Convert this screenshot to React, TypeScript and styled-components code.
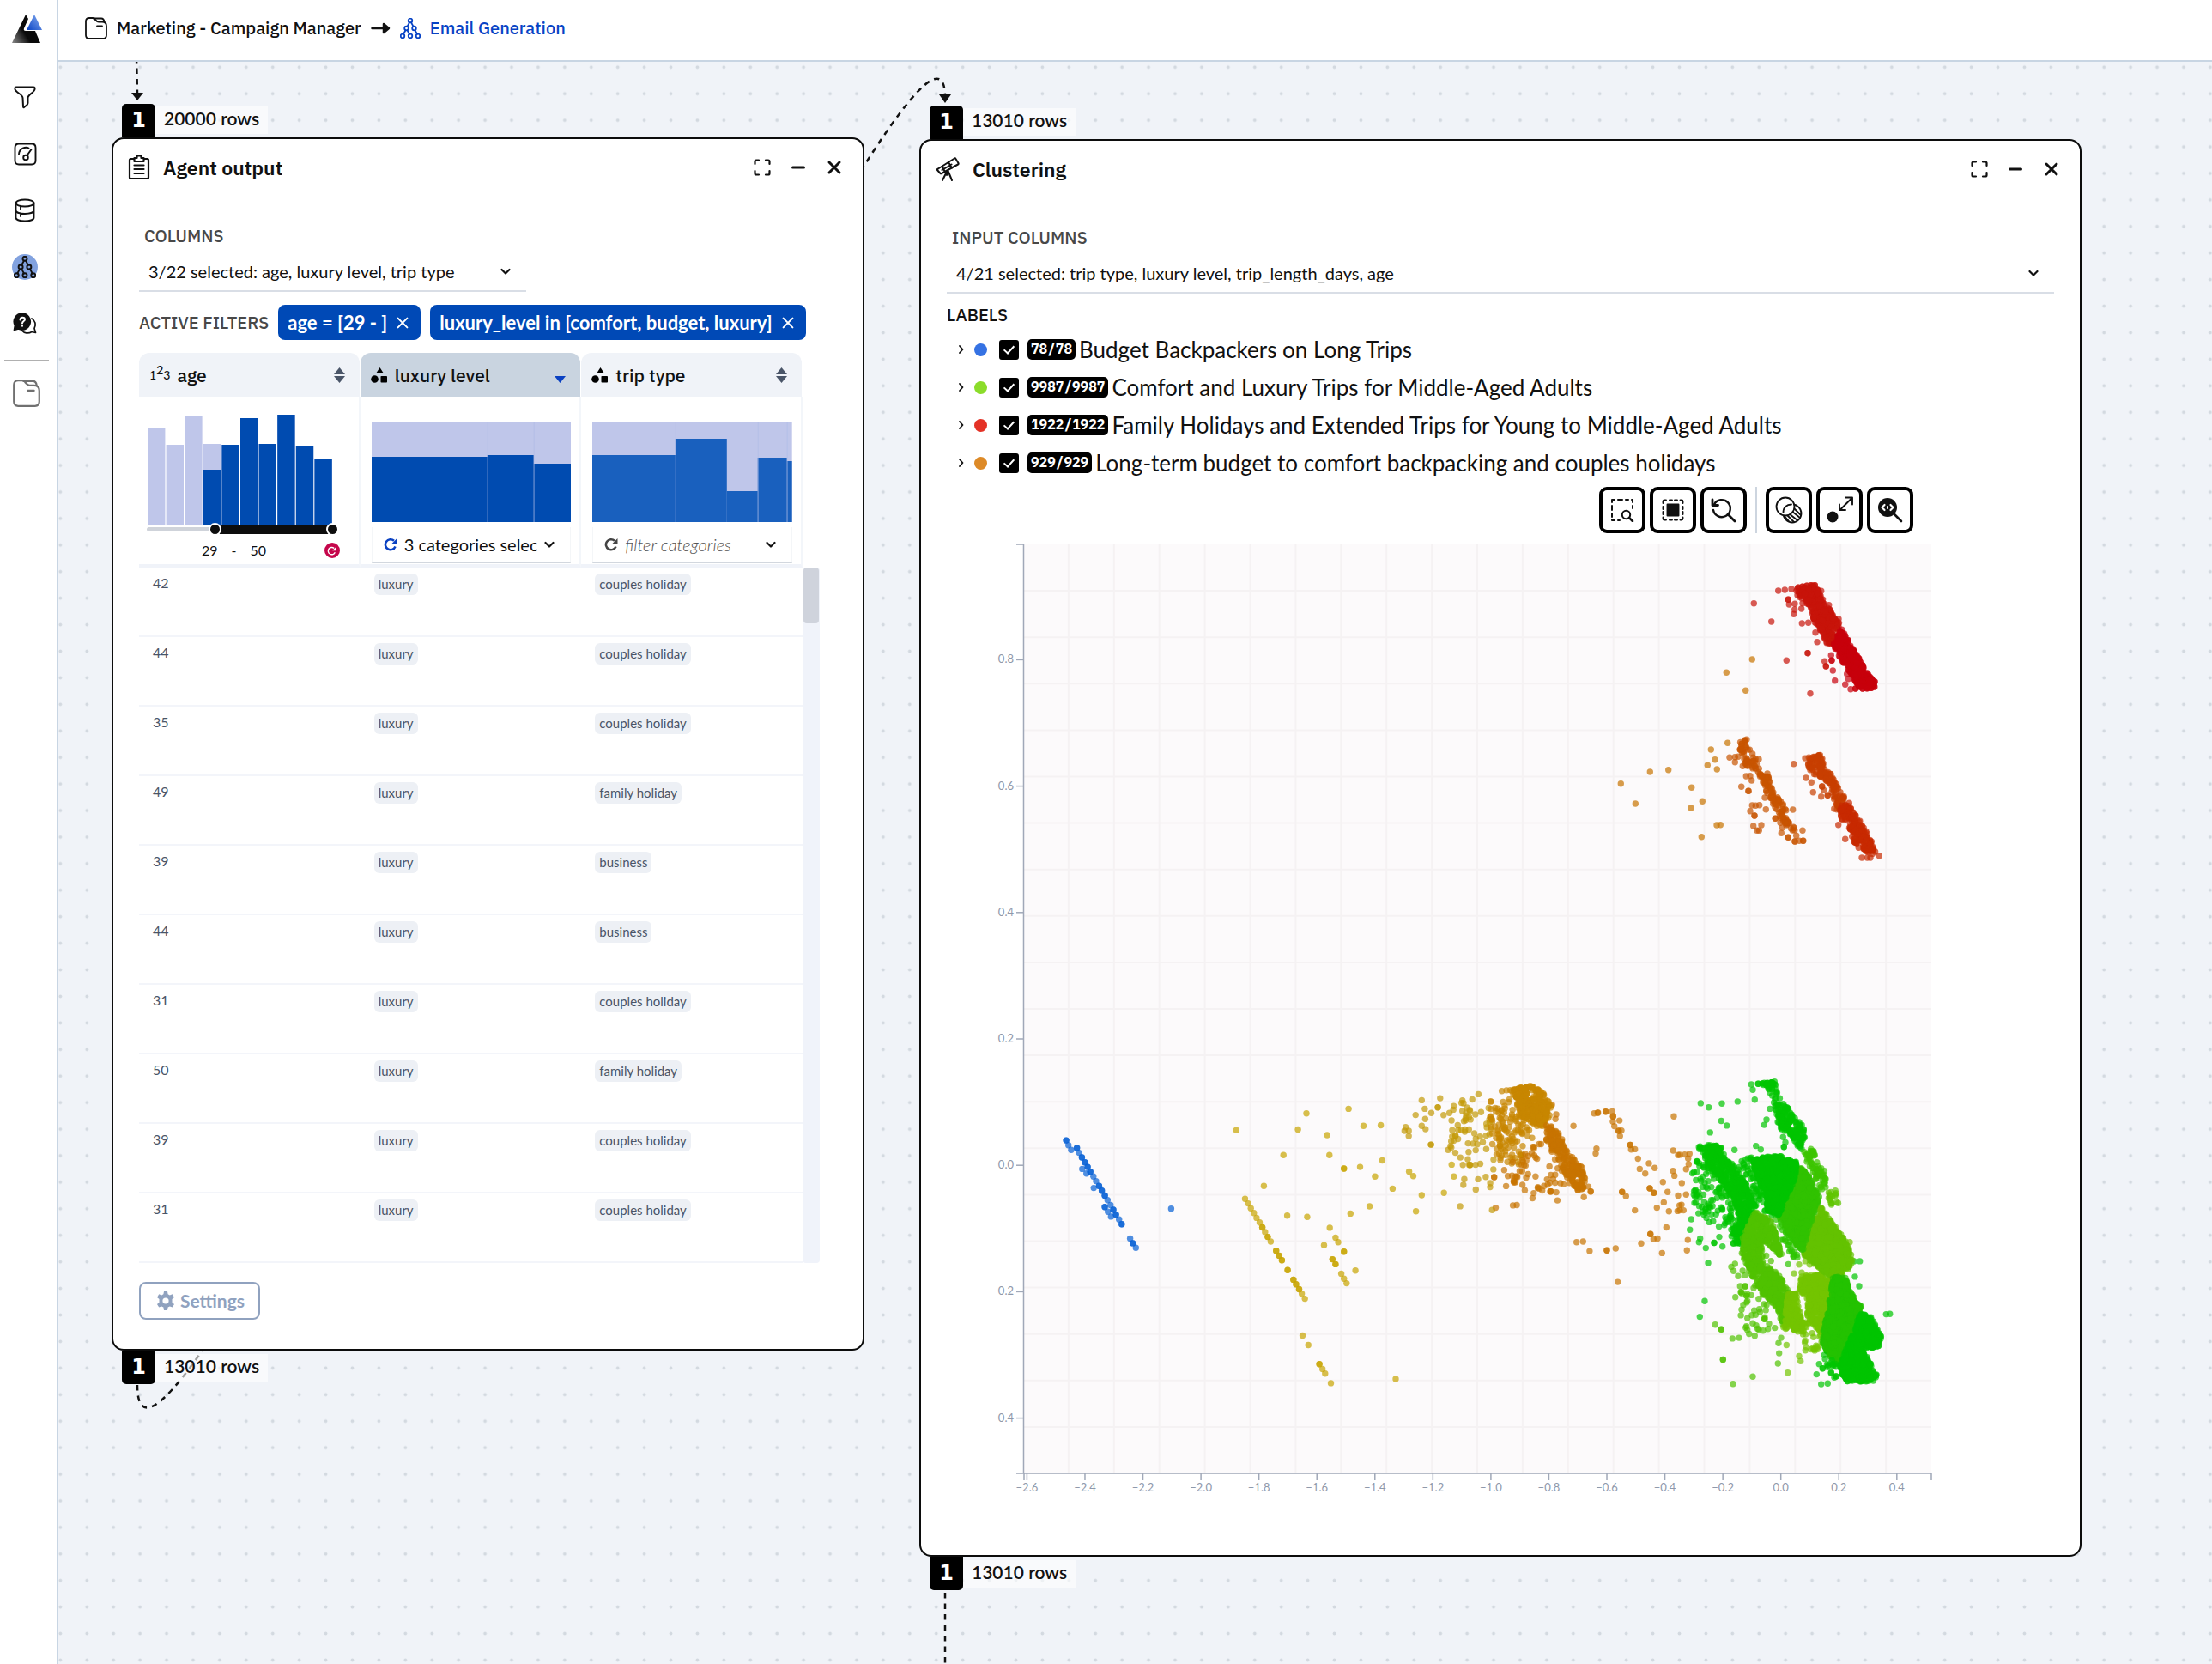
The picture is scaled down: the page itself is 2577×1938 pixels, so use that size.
import React, { useMemo, useState } from "react";
import styled, { createGlobalStyle } from "styled-components";

const heading = '"IBM Plex Sans", Inter, "Noto Sans", sans-serif';
const body = 'Lato, "Noto Sans", sans-serif';
const mono = '"IBM Plex Mono", "Liberation Mono", monospace';

const GlobalStyle = createGlobalStyle`
  *, *::before, *::after { box-sizing: border-box; }
  body { margin: 0; background: #fff; color: #111; font-family: ${body}; }
  button, select, input { font: inherit; color: inherit; margin: 0; }
  button { cursor: pointer; }
`;

/* ---------- shell ---------- */

const Shell = styled.div`
  display: grid;
  grid-template-columns: 68px minmax(0, 1fr);
  grid-template-rows: 72px minmax(0, 1fr);
  height: 100vh;
  overflow: hidden;
`;

const Sidebar = styled.nav`
  grid-row: 1 / 3;
  display: flex;
  flex-direction: column;
  border-right: 2px solid #c8d5e3;
  background: #fff;
`;

const LogoLink = styled.a`
  display: flex;
  height: 80px;
  padding: 16px 0 0 13px;
`;

const NavButton = styled.button<{ $muted?: boolean }>`
  display: flex;
  align-items: center;
  justify-content: center;
  width: ${(p) => (p.$muted ? 62 : 58)}px;
  height: 66px;
  padding: 0;
  border: 0;
  background: none;
  color: ${(p) => (p.$muted ? "#707070" : "#111")};
`;

const ActiveDisc = styled.span`
  display: flex;
  align-items: center;
  justify-content: center;
  width: 30px;
  height: 30px;
  border-radius: 50%;
  background: #82a2df;
`;

const NavRule = styled.hr`
  width: 52px;
  height: 2px;
  margin: 9px 0 4px 5px;
  border: 0;
  background: #b0b0b0;
`;

const TopBar = styled.header`
  display: flex;
  align-items: center;
  gap: 11px;
  padding: 0 32px 4px 31px;
  border-bottom: 2px solid #c8d5e3;
  background: #fff;
  font: 500 20px/24px ${heading};
`;

const Crumb = styled.a<{ $current?: boolean }>`
  display: flex;
  align-items: center;
  gap: 11px;
  color: ${(p) => (p.$current ? "#0743c5" : "#111")};
  text-decoration: none;
`;

const Canvas = styled.main`
  position: relative;
  overflow: hidden;
  background: #f0f3f8;
`;

const CanvasDrawing = styled.svg`
  position: absolute;
  inset: 0;
  width: 100%;
  height: 100%;
`;

/* ---------- nodes ---------- */

const NodeFrame = styled.section<{ $x: number; $y: number; $w: number }>`
  position: absolute;
  left: ${(p) => p.$x}px;
  top: ${(p) => p.$y}px;
  width: ${(p) => p.$w}px;
`;

const Port = styled.div<{ $end?: boolean }>`
  display: flex;
  align-items: ${(p) => (p.$end ? "flex-start" : "flex-end")};
  height: 39px;
  padding-left: 12px;
`;

const PortNumber = styled.span<{ $end?: boolean }>`
  display: flex;
  align-items: center;
  justify-content: center;
  width: 39px;
  height: 39px;
  border-radius: ${(p) => (p.$end ? "0 0 5px 5px" : "5px 5px 0 0")};
  background: #000;
  color: #fff;
  font: 700 24px/39px "DejaVu Sans", sans-serif;
`;

const PortRows = styled.span`
  height: 32px;
  margin: 4px 0;
  padding: 0 10px;
  background: rgba(255, 255, 255, 0.6);
  font: 600 21px/28px ${body};
`;

const Card = styled.div`
  border: 2px solid #0c0c0c;
  border-radius: 14px;
  background: #fff;
`;

const CardHead = styled.header`
  display: flex;
  align-items: center;
  gap: 15px;
  height: 66px;
  padding: 0 23px 0 17px;
`;

const CardTitle = styled.h2`
  flex: 1;
  margin: 0;
  font: 600 23px/28px ${heading};
`;

const WindowButtons = styled.div`
  display: flex;
  gap: 22px;
`;

const IconButton = styled.button`
  display: flex;
  align-items: center;
  justify-content: center;
  min-width: 20px;
  height: 20px;
  padding: 0;
  border: 0;
  background: none;
`;

const CardBody = styled.div<{ $bottom: number }>`
  padding: 35px 30px ${(p) => p.$bottom}px;
`;

const FieldLabel = styled.label`
  display: block;
  padding-left: 6px;
  color: #484848;
  font: 500 20px/24px ${heading};
`;

const SelectBox = styled.div<{ $w?: string }>`
  display: grid;
  grid-template-columns: minmax(0, 1fr) 12px;
  align-items: center;
  width: ${(p) => p.$w ?? "100%"};
  height: 46px;
  margin-top: 7px;
  padding: 0 18px 0 11px;
  border-bottom: 2px solid #d9dee6;
`;

const PlainSelect = styled.select<{ $hint?: boolean }>`
  width: 100%;
  padding: 0;
  border: 0;
  outline: 0;
  appearance: none;
  background: none;
  font-size: 20px;
  line-height: 28px;
  font-style: ${(p) => (p.$hint ? "italic" : "normal")};
  font-weight: ${(p) => (p.$hint ? 300 : 400)};
  color: ${(p) => (p.$hint ? "#555" : "#111")};
`;

const Filters = styled.div`
  display: flex;
  align-items: center;
  gap: 11px;
  margin-top: 15px;
`;

const FiltersTitle = styled.span`
  color: #484848;
  font: 500 20px/24px ${heading};
`;

const Chip = styled.span`
  display: flex;
  align-items: center;
  gap: 8px;
  height: 41px;
  padding: 0 11px;
  border-radius: 8px;
  background: #0049b6;
  color: #fff;
  font: 700 22px/28px ${body};
`;

const TableArea = styled.div`
  display: grid;
  grid-template-columns: 773px 20px;
  margin-top: 15px;
`;

const DataTable = styled.table`
  width: 100%;
  table-layout: fixed;
  border-collapse: separate;
  border-spacing: 0;
`;

const HeadCell = styled.th<{ $active?: boolean }>`
  height: 51px;
  padding: 0;
  border-right: 1px solid #fff;
  border-radius: 12px 12px 0 0;
  background: ${(p) => (p.$active ? "#c9d4e0" : "#f0f3f8")};
  text-align: left;
`;

const HeadButton = styled.button`
  display: flex;
  align-items: center;
  gap: 8px;
  width: 100%;
  height: 51px;
  padding: 0 17px 0 12px;
  border: 0;
  background: none;
  font: 500 21px/24px ${heading};
`;

const HeadName = styled.span`
  flex: 1;
  text-align: left;
`;

const NumberMark = styled.span`
  font: 500 14px/20px ${body};
  sup {
    font-size: 14px;
    line-height: 0;
    vertical-align: 6px;
  }
`;

const FilterCell = styled.td<{ $pad: string }>`
  height: 199px;
  padding: ${(p) => p.$pad};
  border-right: 2px solid #f3f6fa;
  border-bottom: 4px solid #f0f3f9;
  vertical-align: top;
`;

const Slider = styled.div`
  display: grid;
  grid-template-rows: 11px;
  align-items: center;
  width: 224px;
  & > * { grid-area: 1 / 1; }
`;

const Track = styled.div`
  height: 5px;
  margin-right: 7px;
  border-radius: 3px;
  background: #cfd3da;
`;

const TrackFill = styled.div`
  height: 11px;
  margin-right: 7px;
  background: #0d0d0d;
`;

const Range = styled.input`
  width: 100%;
  height: 15px;
  appearance: none;
  background: none;
  pointer-events: none;
  &::-webkit-slider-thumb {
    appearance: none;
    width: 15px;
    height: 15px;
    border: 2px solid #fff;
    border-radius: 50%;
    background: #0d0d0d;
    pointer-events: auto;
  }
`;

const RangeValues = styled.div`
  display: flex;
  align-items: center;
  gap: 16px;
  height: 20px;
  margin-top: 9px;
  padding: 0 22px 0 64px;
  font-size: 16px;
  line-height: 20px;
`;

const ResetButton = styled.button`
  display: flex;
  align-items: center;
  justify-content: center;
  width: 18px;
  height: 18px;
  margin-left: auto;
  padding: 0;
  border: 0;
  border-radius: 50%;
  background: #c5064b;
  color: #fff;
`;

const Chart = styled.svg`
  display: block;
`;

const CategoryBox = styled.div`
  display: grid;
  grid-template-columns: 16px minmax(0, 1fr) 12px;
  align-items: center;
  column-gap: 8px;
  height: 42px;
  margin-top: 6px;
  padding: 0 18px 0 13px;
  border: solid #f4f6f8;
  border-width: 0 1px;
  border-bottom: 2px solid #d2d7de;
`;

const DataCell = styled.td<{ $num?: boolean }>`
  height: 81px;
  padding: 7px 16px;
  border-bottom: 2px solid #f3f5fa;
  color: #4a5568;
  font-size: 16px;
  line-height: 22px;
  vertical-align: top;
`;

const Pill = styled.span`
  display: inline-block;
  padding: 0 5px;
  border-radius: 6px;
  background: #edf0f5;
  font-size: 15px;
  line-height: 25px;
`;

const ScrollTrack = styled.div`
  margin-top: 250px;
  padding: 0 1px;
  border-radius: 4px;
  background: #f0f3fa;
`;

const ScrollThumb = styled.div`
  height: 65px;
  border-radius: 4px;
  background: #cfd3dc;
`;

const SettingsButton = styled.button`
  display: flex;
  align-items: center;
  gap: 6px;
  height: 44px;
  margin-top: 22px;
  padding: 0 16px 0 18px;
  border: 2px solid #90a2bf;
  border-radius: 8px;
  background: #fff;
  color: #90a2bf;
  font: 700 21px/28px ${body};
`;

/* ---------- clustering ---------- */

const LabelsTitle = styled.h3`
  margin: 13px 0 6px;
  font: 500 20px/24px ${heading};
`;

const LabelList = styled.ul`
  margin: 0;
  padding: 0;
  list-style: none;
`;

const LabelItem = styled.li`
  display: flex;
  align-items: center;
  height: 44px;
  padding-left: 7px;
`;

const Dot = styled.span<{ $color: string }>`
  width: 15px;
  height: 15px;
  margin: 0 14px 0 5px;
  border-radius: 50%;
  background: ${(p) => p.$color};
`;

const CheckLabel = styled.label`
  display: flex;
  align-items: center;
  font-size: 26px;
  line-height: 32px;
`;

const Check = styled.input`
  display: grid;
  place-content: center;
  width: 23px;
  height: 23px;
  margin-right: 10px;
  appearance: none;
  border: 2px solid #000;
  border-radius: 3px;
  background: #fff;
  &:checked { background: #000; }
  &:checked::before {
    content: "";
    width: 7px;
    height: 12px;
    margin-bottom: 3px;
    border: solid #fff;
    border-width: 0 2px 2px 0;
    transform: rotate(42deg);
  }
`;

const Count = styled.span`
  height: 24px;
  margin-right: 4px;
  padding: 0 4px;
  border-radius: 5px;
  background: #000;
  color: #fff;
  font: 700 16px/23px ${mono};
`;

const Plot = styled.div`
  width: 1152px;
`;

const Toolbar = styled.div`
  display: flex;
  gap: 5px;
  padding: 6px 26px 4px 0;
  justify-content: flex-end;
`;

const ToolButton = styled.button`
  display: flex;
  align-items: center;
  justify-content: center;
  width: 54px;
  height: 54px;
  padding: 0;
  border: 4px solid #000;
  border-radius: 9px;
  background: #fff;
`;

const ToolRule = styled.span`
  width: 2px;
  margin: 0 5px;
  background: #cdd5df;
`;

/* ---------- icons ---------- */

const stroke = { fill: "none", stroke: "currentColor", strokeLinecap: "round", strokeLinejoin: "round" } as const;

const Logo = () => (
  <svg width="37" height="36" viewBox="0 0 37 36" aria-label="Home">
    <defs>
      <linearGradient id="dark" x1="0" y1="1" x2="0.8" y2="0.5">
        <stop offset="0" stopColor="#8a8a8a" />
        <stop offset="0.6" stopColor="#0a0a0a" />
      </linearGradient>
      <linearGradient id="blue" x1="0" y1="1" x2="1" y2="0">
        <stop offset="0" stopColor="#0a43c4" />
        <stop offset="1" stopColor="#8ab0f2" />
      </linearGradient>
    </defs>
    <path d="M17 1 1 34h33l-6-14H17q-3 0-2-3l5-11z" fill="url(#dark)" />
    <path d="M27 1 18 19h18z" fill="url(#blue)" />
  </svg>
);

const Folder = ({ size = 26 }: { size?: number }) => (
  <svg width={size} height={size} viewBox="0 0 26 26" {...stroke} strokeWidth="1.8">
    <path d="M1 21V5q0-4 4-4h4q2 0 3 2l1 1q1 1.500 3 1.500h4q5 0 5 5V21q0 4-4 4H5q-4 0-4-4z" />
    <path d="M10 1.500h9q3 0 3.500 4M14 10.500h6" />
  </svg>
);

const Tree = ({ w = 24 }: { w?: number }) => (
  <svg width={w} height={w} viewBox="0 0 24 24" {...stroke} strokeWidth="1.800">
    <circle cx="12" cy="3" r="2.300" />
    <circle cx="7.500" cy="12" r="2.300" />
    <circle cx="16.500" cy="12" r="2.300" />
    <circle cx="3" cy="21" r="2.300" />
    <circle cx="12" cy="21" r="2.300" />
    <circle cx="21" cy="21" r="2.300" />
    <path d="m11 5.200-2.500 4.700M13 5.200l2.500 4.700M6.500 14.200 4 18.800M8.500 14.200l2.500 4.600M17.500 14.200l2.500 4.600" />
  </svg>
);

const Funnel = () => (
  <svg width="26" height="27" viewBox="0 0 26 27" {...stroke} strokeWidth="2">
    <path d="M3 1.500h20q2 0 1.500 2.500c-.5 4-8 6-8 10v6q0 2-2 3l-2.500 2q-1 .5-1-1l-.5-10c0-4-8-6-9-10Q1 1.500 3 1.500z" />
  </svg>
);

const Gauge = () => (
  <svg width="27" height="27" viewBox="0 0 27 27" {...stroke} strokeWidth="1.900">
    <path d="M6 1.500h15q4.500 0 4.500 4.500v15q0 4.500-4.500 4.500H6q-4.500 0-4.500-4.500V6q0-4.500 4.500-4.500z" />
    <circle cx="14" cy="17.500" r="2.800" />
    <path d="m15.500 15 5-7M6 13.500c.5-7 8-9 11.500-7" />
  </svg>
);

const Database = () => (
  <svg width="24" height="28" viewBox="0 0 24 28" {...stroke} strokeWidth="1.900">
    <ellipse cx="12" cy="5.500" rx="10.500" ry="4" />
    <path d="M1.500 5.500v17c0 5.300 21 5.300 21 0v-17M1.500 14c0 5.300 21 5.300 21 0M7 9.500v3M7 18v3" />
  </svg>
);

const HelpChat = () => (
  <svg width="28" height="26" viewBox="0 0 28 26" {...stroke} strokeWidth="1.700">
    <path d="M22 7c4 2 5.500 7.500 3 11.500l1.500 5-4.500-1c-4 2.500-9 1.500-11.500-1.500" />
    <path d="M11 1a9.500 9.500 0 1 1-4.500 18L1.500 20.500 2.500 15A9.500 9.500 0 0 1 11 1z" fill="currentColor" />
    <path d="M8.500 8.500c0-4 5.500-3.500 5.500-.5 0 2-3 2-3 4.500M11 15.500v.200" stroke="#fff" strokeWidth="2" />
  </svg>
);

const ArrowRight = () => (
  <svg width="23" height="14" viewBox="0 0 23 14" {...stroke} strokeWidth="2.500">
    <path d="M1.500 7H19" />
    <path d="m15 2 6 5-6 5z" fill="currentColor" />
  </svg>
);

const Clipboard = () => (
  <svg width="26" height="30" viewBox="0 0 26 30" {...stroke} strokeWidth="2.200">
    <path d="M7 5H3.500Q2 5 2 6.500v20Q2 28 3.500 28h19q1.500 0 1.500-1.500v-20Q24 5 22.500 5H19" />
    <path d="M7.500 8V4h3V1.500h5V4h3v4zM7.500 12.500h11M7.500 17h11M7.500 22h11" />
  </svg>
);

const Telescope = () => (
  <svg width="28" height="28" viewBox="0 0 28 28" {...stroke} strokeWidth="2">
    <path d="M3 13.500 22 1.500q1-.5 1.500.5l3 5q.5 1-.5 1.500L7 19q-1 .5-1.500 0L2 15q-.5-1 1-1.500z" />
    <path d="m7.500 11 3.500 6M15 6l4 6.500M7.500 15l11-6.500M13.500 16 8 27M14.500 16 19 27M13 17v4" />
  </svg>
);

const Maximize = () => (
  <svg width="20" height="20" viewBox="0 0 20 20" {...stroke} strokeWidth="2.200">
    <path d="M1.500 6V3q0-1.500 1.500-1.500h3M14 1.500h3q1.500 0 1.500 1.500v3M18.500 14v3q0 1.500-1.500 1.500h-3M6 18.500H3Q1.500 18.500 1.500 17v-3" />
  </svg>
);

const Minus = () => (
  <svg width="20" height="20" viewBox="0 0 20 20" {...stroke} strokeWidth="3">
    <path d="M3.500 10h13" />
  </svg>
);

const Cross = ({ size = 20, weight = 3 }: { size?: number; weight?: number }) => (
  <svg width={size} height={size} viewBox="0 0 20 20" {...stroke} strokeWidth={weight}>
    <path d="m4 4 12 12M16 4 4 16" />
  </svg>
);

const ChevronDown = () => (
  <svg width="12" height="9" viewBox="0 0 12 9" {...stroke} strokeWidth="2.200">
    <path d="m1.500 2 4.500 4.500L10.500 2" />
  </svg>
);

const ChevronRight = () => (
  <svg width="8" height="10" viewBox="0 0 8 10" {...stroke} strokeWidth="1.800">
    <path d="m2 1 3.500 4L2 9" />
  </svg>
);

const Refresh = ({ size = 16, color = "currentColor", weight = 2.6 }: { size?: number; color?: string; weight?: number }) => (
  <svg width={size} height={size} viewBox="0 0 16 16" fill="none" stroke={color} strokeWidth={weight}>
    <path d="M13.500 10.500A6 6 0 1 1 12 3.800" />
    <path d="M15.500 1v6.500H9z" fill={color} stroke="none" />
  </svg>
);

const Shapes = () => (
  <svg width="20" height="18" viewBox="0 0 20 18" fill="#000">
    <path d="M10.500 0 15 7H6z" />
    <circle cx="4.500" cy="13.500" r="4.300" />
    <rect x="11.500" y="10" width="7.500" height="7.500" rx="0.800" />
  </svg>
);

const Sort = ({ active }: { active?: boolean }) => (
  <svg width="13" height="18" viewBox="0 0 13 18" fill={active ? "#0a41c2" : "#4a5568"}>
    {!active && <path d="M6.500 0 13 8H0z" />}
    <path d="M0 10h13l-6.500 8z" />
  </svg>
);

const Gear = () => (
  <svg width="22" height="22" viewBox="0 0 22 22" fill="currentColor">
    <path
      fillRule="evenodd"
      d="M9 0h4l.6 3.200 2.200 1.200 3-1.200 2.200 3.700-2.500 2.100v3.800l2.500 2.100-2.200 3.700-3-1.200-2.200 1.200L13 22H9l-.6-3.400-2.200-1.200-3 1.200L1 14.900l2.500-2.100V9L1 6.900l2.200-3.700 3 1.200 2.200-1.200zM11 7.400a3.600 3.600 0 1 0 0 7.200 3.600 3.600 0 0 0 0-7.200z"
    />
  </svg>
);

const ZoomSelect = () => (
  <svg width="28" height="28" viewBox="0 0 28 28" {...stroke} strokeWidth="2">
    <path d="M2 5V2h3M9 2h5M18 2h3M25 2h1v3M2 9v5M2 18v4M2 25v1h3M9 26h2M26 9v3" />
    <circle cx="18.500" cy="19.500" r="4.700" />
    <path d="m22 23 4 4" strokeWidth="2.500" />
  </svg>
);

const SelectArea = () => (
  <svg width="26" height="26" viewBox="0 0 26 26" {...stroke} strokeWidth="1.900">
    <rect x="6.500" y="6.500" width="13" height="13" fill="currentColor" />
    <path d="M1.500 5V3q0-1.500 1.500-1.500h2M9 1.500h3M15 1.500h3M21.500 1.500H23q1.500 0 1.500 1.500v2M24.500 9v3M24.500 15v3M24.500 21.500V23q0 1.500-1.500 1.500h-1.500M18 24.500h-3M12 24.500H9M5 24.500H3q-1.500 0-1.500-1.500v-1.500M1.500 18v-3M1.500 12V9" />
  </svg>
);

const ResetZoom = () => (
  <svg width="30" height="30" viewBox="0 0 30 30" {...stroke} strokeWidth="2.400">
    <path d="M4 8.500A10 10 0 1 1 3 15" />
    <path d="M2 3v6.500h6.500M20 20l8 8" strokeWidth="2.800" />
  </svg>
);

const Overlap = () => (
  <svg width="32" height="32" viewBox="0 0 32 32" {...stroke} strokeWidth="1.800">
    <circle cx="20" cy="20" r="10.500" />
    <path d="m10 22 6 7M12 20l10 10M16 20l10 8M19 17l10 8M21 13l9 9" />
    <circle cx="12" cy="12" r="10.500" fill="#fff" />
    <path d="M9.500 19c0-6 4-9.500 9.500-9.500" />
  </svg>
);

const PointSize = () => (
  <svg width="32" height="32" viewBox="0 0 32 32" {...stroke} strokeWidth="1.900">
    <circle cx="8" cy="24" r="6.500" fill="currentColor" stroke="none" />
    <path d="M17 15.500 30.500 2M23 1.500h8v8M16 9.500V16h7" />
  </svg>
);

const CodeZoom = () => (
  <svg width="30" height="30" viewBox="0 0 30 30" {...stroke} strokeWidth="2.600">
    <circle cx="12" cy="12" r="11" fill="currentColor" stroke="none" />
    <path d="m20 20 8 8" />
    <path d="M8.500 9 5.500 12l3 3M15.500 9l3 3-3 3" stroke="#fff" strokeWidth="2.200" />
    <path d="M12 11v2" stroke="#fff" strokeWidth="2" />
  </svg>
);

/* ---------- scatter data ---------- */

type Pair = [number, number];
type View = { ox: number; oy: number; sx: number; sy: number };
type Patch = { color: string; density: number; shape: number[]; inset?: number };
type Layer = { view: View; patches: Patch[]; singles: { color: string; at: number[]; twice?: number[] }[] };

const upper: View = { ox: 1850, oy: 640, sx: 3, sy: 3 };
const left: View = { ox: 1180, oy: 1180, sx: 2.24, sy: 2.613 };
const right: View = { ox: 1860, oy: 1180, sx: 3, sy: 2.613 };

const layers: Layer[] = [
  {
    view: upper,
    patches: [
      { color: "#c8140a", density: 0.24, shape: [728, 128, 800, 118, 825, 165, 863, 225, 888, 258, 865, 335, 825, 345, 815, 295, 786, 265, 772, 205, 740, 175, 712, 160] },
      { color: "#c8000c", density: 0.28, shape: [885, 260, 922, 322, 955, 380, 980, 425, 1010, 460, 1004, 490, 950, 492, 925, 462, 895, 410, 868, 375, 850, 330] },
      { color: "#c85400", density: 0.13, shape: [520, 658, 562, 656, 575, 700, 598, 735, 608, 775, 636, 785, 655, 835, 672, 865, 700, 900, 700, 935, 738, 978, 725, 1000, 692, 975, 662, 935, 642, 895, 618, 850, 598, 810, 580, 775, 545, 760, 535, 720, 520, 705] },
      { color: "#c83f00", density: 0.16, shape: [745, 718, 818, 710, 836, 750, 858, 785, 882, 825, 902, 860, 902, 890, 885, 920, 843, 920, 848, 875, 842, 840, 822, 805, 797, 795, 768, 788, 757, 745] },
      { color: "#c82a00", density: 0.16, shape: [885, 870, 922, 895, 948, 930, 970, 968, 992, 1005, 1015, 1050, 1010, 1070, 985, 1088, 952, 1045, 922, 1030, 905, 985, 900, 955, 875, 935, 872, 905] },
    ],
    singles: [
      { color: "#c8140a", at: [665, 144, 688, 141, 711, 138, 580, 188, 641, 252, 748, 258, 770, 256, 719, 226, 703, 192, 722, 210, 746, 207, 723, 190, 750, 188, 694, 388, 827, 391, 801, 323, 777, 503, 795, 290, 842, 194, 876, 243, 815, 145], twice: [700, 175, 768, 362, 832, 408, 735, 133, 750, 130, 765, 127, 780, 125, 793, 125] },
      { color: "#c8000c", at: [856, 423, 863, 458, 850, 370, 899, 472, 918, 488, 905, 435, 910, 452], twice: [852, 388, 935, 486, 960, 486, 975, 485, 990, 484, 1001, 480, 1002, 462] },
      { color: "#c87400", at: [574, 384, 484, 430, 551, 493, 488, 676, 430, 699, 444, 734, 418, 754, 451, 768, 281, 770, 217, 777, 115, 818, 362, 832, 166, 888, 400, 880, 360, 903, 450, 963, 463, 962, 397, 1004] },
      { color: "#c85400", at: [495, 727, 514, 725, 514, 743, 525, 724, 541, 757, 553, 792, 567, 791, 572, 807, 536, 829, 618, 867, 574, 894, 586, 895, 599, 893, 567, 914, 622, 908, 578, 966, 606, 963, 590, 982, 598, 982, 676, 991, 679, 972, 716, 909, 750, 982, 738, 1018, 728, 1000, 672, 955, 597, 733, 627, 783], twice: [561, 844, 582, 930, 655, 940, 700, 1006, 723, 1020, 752, 1018] },
      { color: "#c83f00", at: [719, 749, 762, 798, 781, 814, 787, 848, 815, 863, 824, 841], twice: [818, 828, 838, 859] },
      { color: "#c82a00", at: [913, 886, 875, 962, 899, 1012, 1018, 1070, 957, 1077, 976, 1077, 987, 1077, 946, 1042], twice: [888, 942] },
    ],
  },
  {
    view: left,
    patches: [
      { color: "#c39a08", density: 0.014, inset: 1, shape: [1100, 285, 1160, 275, 1210, 240, 1245, 255, 1250, 350, 1240, 470, 1190, 470, 1130, 425, 1135, 370, 1105, 300] },
      { color: "#c39a08", density: 0.004, inset: 1, shape: [1150, 460, 1260, 440, 1270, 605, 1165, 605] },
      { color: "#c88600", density: 0.034, inset: 1, shape: [1230, 300, 1290, 235, 1335, 280, 1365, 400, 1330, 470, 1260, 460, 1240, 380] },
      { color: "#c88600", density: 0.15, shape: [1285, 226, 1352, 214, 1396, 240, 1412, 290, 1400, 350, 1360, 350, 1322, 315, 1310, 275, 1300, 250] },
      { color: "#c87400", density: 0.015, inset: 1, shape: [1270, 470, 1400, 370, 1445, 490, 1420, 550, 1320, 560, 1290, 550] },
      { color: "#c87400", density: 0.15, shape: [1385, 325, 1418, 345, 1440, 380, 1450, 410, 1472, 440, 1490, 465, 1498, 500, 1500, 535, 1475, 548, 1445, 520, 1430, 475, 1410, 440, 1395, 410, 1380, 380] },
    ],
    singles: [
      { color: "#0560d4", at: [145, 402, 152, 416, 173, 425, 181, 474, 192, 488, 210, 497, 217, 511, 211, 532, 247, 569, 255, 584, 248, 604, 256, 619, 277, 628, 306, 686, 321, 714, 413, 595], twice: [139, 387, 167, 410, 180, 439, 188, 454, 195, 468, 202, 483, 225, 526, 232, 540, 240, 555, 240, 590, 262, 598, 269, 613, 284, 642, 313, 700] },
      { color: "#c8a400", at: [606, 565, 614, 579, 621, 594, 629, 608, 636, 623, 644, 637, 658, 666, 673, 695, 754, 854, 762, 869, 756, 981, 771, 1010, 808, 1083, 815, 1097, 830, 1126, 999, 1113, 583, 356, 744, 354, 766, 305, 876, 291, 820, 371, 706, 432, 826, 432, 906, 468, 945, 497, 964, 448, 991, 534, 915, 343, 960, 341, 655, 526, 716, 616, 768, 620, 881, 610, 931, 588, 827, 653, 842, 683, 849, 697, 812, 706, 857, 793, 864, 808, 871, 822, 894, 783, 1034, 482, 1045, 496, 1067, 554, 1125, 547, 1052, 603, 1151, 497, 1145, 461], twice: [651, 652, 665, 681, 687, 723, 695, 738, 702, 752, 717, 782, 732, 811, 739, 825, 747, 840, 800, 1068, 864, 473, 864, 726, 834, 749, 842, 764] },
      { color: "#c39a08", at: [1067, 265, 1115, 259, 1051, 310, 1075, 291, 1076, 322, 1067, 343, 1077, 353, 1092, 304, 1173, 266, 1025, 347, 1033, 374, 1022, 358, 1033, 358, 1162, 356, 1170, 355, 1180, 354, 1190, 354, 1136, 416, 1142, 405, 1144, 390], twice: [1091, 400, 1109, 287, 1155, 373, 1193, 462] },
      { color: "#c88600", at: [1276, 237, 1288, 235, 1298, 234, 1251, 330, 1258, 345, 1266, 360, 1274, 378, 1278, 395, 1285, 420, 1286, 432], twice: [1247, 269, 1275, 296, 1308, 233, 1318, 232, 1330, 231, 1340, 230, 1271, 404] },
      { color: "#c87400", at: [1502, 528, 1490, 560, 1421, 570, 1402, 543, 1437, 521, 1356, 563, 1305, 585, 1315, 584, 1260, 592, 1471, 697, 1488, 695, 1505, 724, 1550, 722, 1517, 305, 1526, 303, 1547, 300, 1463, 343, 1523, 412, 1521, 427, 1418, 308, 1416, 322, 1407, 279], twice: [1508, 543, 1404, 543, 1256, 499] },
    ],
  },
  {
    view: right,
    patches: [
      { color: "#2cc400", density: 0.06, inset: 1, shape: [635, 610, 690, 680, 715, 745, 685, 750, 640, 690] },
      { color: "#00c400", density: 0.2, shape: [336, 402, 428, 390, 468, 440, 498, 475, 520, 510, 550, 550, 568, 590, 550, 640, 510, 708, 465, 708, 472, 650, 485, 610, 470, 560, 440, 530, 415, 500, 385, 480, 378, 450, 360, 425] },
      { color: "#00c400", density: 0.03, inset: 1, shape: [330, 430, 395, 470, 485, 560, 480, 710, 410, 640, 340, 600, 330, 520] },
      { color: "#00c400", density: 0.13, shape: [555, 208, 628, 200, 640, 240, 660, 270, 695, 305, 732, 345, 738, 375, 722, 425, 690, 405, 675, 375, 635, 355, 622, 325, 605, 260, 590, 232] },
      { color: "#00c400", density: 0.05, inset: 1, shape: [495, 440, 545, 435, 600, 540, 655, 620, 600, 625, 550, 560, 485, 520] },
      { color: "#3cc400", density: 0.1, inset: 1, shape: [718, 400, 760, 412, 775, 455, 800, 475, 812, 520, 785, 555, 755, 490, 728, 450] },
      { color: "#60c400", density: 0.08, inset: 1, shape: [800, 545, 840, 535, 858, 575, 825, 600] },
      { color: "#50c200", density: 0.22, shape: [550, 596, 618, 625, 656, 735, 640, 745, 585, 700, 588, 755, 636, 785, 680, 845, 672, 940, 650, 965, 622, 900, 582, 865, 552, 825, 520, 780, 500, 730, 502, 685] },
      { color: "#50c200", density: 0.01, inset: 1, shape: [470, 760, 530, 780, 600, 870, 640, 970, 520, 980, 480, 860] },
      { color: "#74c400", density: 0.2, shape: [660, 850, 712, 845, 710, 880, 732, 950, 722, 978, 645, 965] },
      { color: "#74c400", density: 0.04, inset: 1, shape: [690, 940, 790, 930, 790, 1030, 720, 1030] },
      { color: "#74c400", density: 0.24, shape: [705, 795, 785, 785, 832, 812, 825, 870, 806, 930, 790, 1008, 765, 965, 730, 925, 726, 870, 700, 840] },
      { color: "#64c200", density: 0.3, shape: [780, 575, 836, 640, 878, 690, 905, 745, 896, 772, 850, 815, 800, 800, 755, 768, 712, 735, 742, 660] },
      { color: "#30c200", density: 0.3, shape: [708, 455, 750, 495, 790, 565, 752, 650, 725, 735, 682, 700, 638, 625, 660, 570] },
      { color: "#00c400", density: 0.3, shape: [532, 438, 635, 426, 712, 450, 698, 510, 640, 625, 592, 605, 576, 540, 550, 490] },
      { color: "#24c200", density: 0.3, shape: [820, 796, 874, 796, 898, 850, 932, 890, 912, 965, 850, 1082, 800, 1040, 778, 995, 806, 880] },
      { color: "#00c400", density: 0.3, shape: [925, 906, 965, 920, 1004, 985, 996, 1022, 935, 1028, 892, 975, 908, 920] },
      { color: "#00c400", density: 0.3, shape: [892, 965, 950, 1040, 988, 1100, 980, 1124, 905, 1130, 858, 1118, 842, 1070] },
      { color: "#00c400", density: 0.04, inset: 1, shape: [785, 1020, 850, 1070, 870, 1120, 810, 1110] },
    ],
    singles: [
      { color: "#c87400", at: [5, 303, 32, 300, 55, 299, 57, 330, 80, 327, 62, 344, 87, 357, 82, 374, 121, 415, 134, 414, 145, 443, 151, 474, 170, 488, 183, 457, 203, 471, 103, 557, 134, 600, 232, 514, 248, 544, 235, 576, 211, 592, 253, 603, 244, 652, 199, 687, 213, 686, 156, 701, 67, 716, 36, 722, 74, 818, 229, 730, 267, 480, 272, 495, 270, 314, 268, 418, 285, 432, 291, 431, 308, 430, 325, 428, 320, 442, 322, 460, 313, 475, 298, 517, 313, 552, 285, 555, 290, 585, 297, 583, 283, 602, 291, 600, 304, 600, 319, 690, 316, 722], twice: [58, 314, 77, 358, 118, 401, 89, 544, 186, 533, 200, 547, 188, 672] },
      { color: "#00c400", at: [331, 627, 326, 659, 362, 686, 358, 697, 382, 715, 429, 681, 440, 710, 384, 623, 394, 636, 356, 609, 390, 760, 378, 876, 361, 924, 364, 274, 392, 287, 438, 275, 493, 269, 436, 328, 455, 342, 397, 363, 482, 416, 553, 263, 594, 324, 586, 340, 557, 404, 574, 415, 541, 217, 546, 233, 606, 291, 652, 377, 660, 393, 1012, 916, 1025, 915, 920, 755, 903, 802, 918, 831, 900, 755, 880, 773, 785, 1129, 808, 1127, 769, 1099, 778, 1068, 820, 1093, 890, 1118], twice: [411, 699, 655, 407, 790, 1081, 877, 1120, 837, 1105, 565, 215, 580, 214, 595, 213, 612, 211] },
      { color: "#50c200", at: [471, 772, 484, 763, 495, 800, 518, 798, 502, 831, 485, 864, 541, 858, 527, 876, 507, 902, 543, 919, 551, 905, 556, 918, 524, 953, 546, 944, 558, 950, 567, 963, 533, 976, 553, 982, 603, 945, 599, 961, 623, 958, 415, 948, 475, 990, 498, 988, 546, 1106, 477, 1128, 636, 1004, 645, 988, 638, 1035, 634, 1066, 593, 738, 610, 754], twice: [524, 860, 587, 931, 436, 962, 442, 1054] },
      { color: "#74c400", at: [668, 1094, 664, 1010, 708, 1044, 713, 1059, 730, 1026, 750, 1023, 760, 1023, 772, 1023, 690, 792, 717, 790, 708, 765, 730, 755, 745, 765, 885, 697] },
      { color: "#2cc400", at: [670, 764, 668, 705, 645, 690, 650, 660, 627, 628], twice: [688, 740] },
    ],
  },
];

function pairs(flat: number[], v: View): Pair[] {
  const out: Pair[] = [];
  for (let i = 0; i < flat.length; i += 2) out.push([v.ox + flat[i] / v.sx, v.oy + flat[i + 1] / v.sy]);
  return out;
}

function contains(poly: Pair[], x: number, y: number) {
  let inside = false;
  for (let i = 0, j = poly.length - 1; i < poly.length; j = i++) {
    const [xi, yi] = poly[i];
    const [xj, yj] = poly[j];
    if (yi > y !== yj > y && x < ((xj - xi) * (y - yi)) / (yj - yi) + xi) inside = !inside;
  }
  return inside;
}

function edgeDistance(poly: Pair[], x: number, y: number) {
  let best = Infinity;
  for (let i = 0, j = poly.length - 1; i < poly.length; j = i++) {
    const [ax, ay] = poly[j];
    const [bx, by] = poly[i];
    const dx = bx - ax;
    const dy = by - ay;
    const t = Math.max(0, Math.min(1, ((x - ax) * dx + (y - ay) * dy) / (dx * dx + dy * dy)));
    best = Math.min(best, Math.hypot(x - ax - t * dx, y - ay - t * dy));
  }
  return best;
}

function buildPoints() {
  let seed = 20731;
  const random = () => {
    seed = (seed * 1664525 + 1013904223) % 4294967296;
    return seed / 4294967296;
  };
  const points: { x: number; y: number; color: string }[] = [];
  layers.forEach(({ view, patches, singles }) => {
    singles.forEach(({ color, at, twice = [] }) => {
      pairs(at, view).forEach(([x, y]) => points.push({ x, y, color }));
      pairs(twice, view).forEach(([x, y]) => points.push({ x, y, color }, { x, y, color }));
    });
    patches.forEach(({ color, density, shape, inset = 2.4 }) => {
      const poly = pairs(shape, view);
      const xs = poly.map((p) => p[0]);
      const ys = poly.map((p) => p[1]);
      const x0 = Math.min(...xs);
      const y0 = Math.min(...ys);
      const w = Math.max(...xs) - x0;
      const h = Math.max(...ys) - y0;
      const tries = Math.round(w * h * density);
      for (let i = 0; i < tries; i++) {
        const x = x0 + random() * w;
        const y = y0 + random() * h;
        if (contains(poly, x, y) && edgeDistance(poly, x, y) >= inset) points.push({ x, y, color });
      }
    });
  });
  return points;
}

const xTicks = Array.from({ length: 16 }, (_, i) => (i - 13) / 5);
const yTicks = [0.8, 0.6, 0.4, 0.2, 0, -0.2, -0.4];
const grid = Array.from({ length: 19 }, (_, i) => i + 1);
const xAt = (v: number) => 2074.7 + v * 337.8;
const yAt = (v: number) => 1357.2 - v * 736;
const tickText = (v: number) => v.toFixed(1).replace("-", "−");

function Scatter() {
  const points = useMemo(buildPoints, []);
  return (
    <Chart width="1152" height="1126" viewBox="1103 625 1152 1126" role="img" aria-label="Cluster scatter plot">
      <rect x="1192" y="634" width="1058" height="1082" fill="#fcfafb" />
      <g stroke="#f5f2f3" strokeWidth="2">
        {grid.map((k) => (
          <path key={k} d={`M${1192 + k * 52.9} 634V1716M1192 ${634 + k * 54.1}H2250`} />
        ))}
      </g>
      <g fillOpacity="0.7">
        {points.map((p, i) => (
          <circle key={i} cx={p.x.toFixed(1)} cy={p.y.toFixed(1)} r="3.7" fill={p.color} />
        ))}
      </g>
      <g stroke="#a0a8b8" strokeWidth="1.5" fill="none">
        <path d="M1184 634H1192.500V1716H1184M1193 1724V1716H2250V1724" />
        {xTicks.map((v) => (
          <path key={v} d={`M${xAt(v)} 1716v8`} />
        ))}
        {yTicks.map((v) => (
          <path key={v} d={`M1184 ${yAt(v)}h8`} />
        ))}
      </g>
      <g fill="#8f99ab" fontFamily={body} fontSize="13">
        {xTicks.map((v) => (
          <text key={v} x={xAt(v)} y="1737" textAnchor="middle">{tickText(v)}</text>
        ))}
        {yTicks.map((v) => (
          <text key={v} x="1181" y={yAt(v) + 4} textAnchor="end">{tickText(v)}</text>
        ))}
      </g>
    </Chart>
  );
}

/* ---------- column charts ---------- */

const ageBars = [
  { all: 112 }, { all: 93 }, { all: 126 }, { all: 94, kept: 64 }, { all: 93, kept: 93 },
  { all: 124, kept: 124 }, { all: 94, kept: 94 }, { all: 128, kept: 128 }, { all: 92, kept: 92 }, { all: 76, kept: 76 },
];

const AgeHistogram = () => (
  <Chart width="218" height="129" viewBox="0 0 218 129" role="img" aria-label="age distribution">
    {ageBars.map((b, i) => (
      <g key={i}>
        <rect x={1 + i * 21.6} y={129 - b.all} width="20.4" height={b.all} fill="#bfc6ea" />
        {b.kept && <rect x={1 + i * 21.6} y={129 - b.kept} width="20.4" height={b.kept} fill="#004bb0" />}
      </g>
    ))}
  </Chart>
);

type Share = { w: number; h: number };

function ShareChart({ shares, color, name }: { shares: Share[]; color: string; name: string }) {
  let x = 0;
  return (
    <Chart width="100%" height="116" viewBox="0 0 233 116" preserveAspectRatio="none" role="img" aria-label={name}>
      <rect width="233" height="116" fill="#bfc6ea" />
      {shares.map((s, i) => {
        const start = x;
        x += s.w;
        return (
          <g key={i}>
            <rect x={start} y={116 - s.h} width={s.w} height={s.h} fill={color} />
            {i > 0 && <rect x={start} width="1" height="116" fill="#aebbe6" opacity={i === 2 && s.h < 40 ? 0 : 0.6} />}
          </g>
        );
      })}
    </Chart>
  );
}

/* ---------- page ---------- */

const rows: [number, string, string][] = [
  [42, "luxury", "couples holiday"],
  [44, "luxury", "couples holiday"],
  [35, "luxury", "couples holiday"],
  [49, "luxury", "family holiday"],
  [39, "luxury", "business"],
  [44, "luxury", "business"],
  [31, "luxury", "couples holiday"],
  [50, "luxury", "family holiday"],
  [39, "luxury", "couples holiday"],
  [31, "luxury", "couples holiday"],
];

const clusters = [
  { color: "#3572e3", count: "78/78", name: "Budget Backpackers on Long Trips" },
  { color: "#8bdc2a", count: "9987/9987", name: "Comfort and Luxury Trips for Middle-Aged Adults" },
  { color: "#e43226", count: "1922/1922", name: "Family Holidays and Extended Trips for Young to Middle-Aged Adults" },
  { color: "#dd8a27", count: "929/929", name: "Long-term budget to comfort backpacking and couples holidays" },
];

const MIN_AGE = 18;
const MAX_AGE = 50;

function AgeFilter() {
  const [low, setLow] = useState(29);
  const [high, setHigh] = useState(50);
  const start = ((low - MIN_AGE) / (MAX_AGE - MIN_AGE)) * 100;
  return (
    <>
      <AgeHistogram />
      <Slider>
        <Track />
        <TrackFill style={{ marginLeft: `${start}%` }} />
        <Range type="range" aria-label="Lowest age" min={MIN_AGE} max={MAX_AGE} value={low} onChange={(e) => setLow(Math.min(+e.target.value, high))} />
        <Range type="range" aria-label="Highest age" min={MIN_AGE} max={MAX_AGE} value={high} onChange={(e) => setHigh(Math.max(+e.target.value, low))} />
      </Slider>
      <RangeValues>
        <span>{low}</span>
        <span>-</span>
        <span>{high}</span>
        <ResetButton aria-label="Reset age" onClick={() => { setLow(MIN_AGE); setHigh(MAX_AGE); }}>
          <Refresh size={11} weight={2} />
        </ResetButton>
      </RangeValues>
    </>
  );
}

function Window({ icon, title, x, y, w, input, output, bottom, children }: {
  icon: React.ReactNode; title: string; x: number; y: number; w: number;
  input: string; output: string; bottom: number; children: React.ReactNode;
}) {
  return (
    <NodeFrame $x={x} $y={y} $w={w}>
      <Port><PortNumber>1</PortNumber><PortRows>{input}</PortRows></Port>
      <Card>
        <CardHead>
          {icon}
          <CardTitle>{title}</CardTitle>
          <WindowButtons>
            <IconButton aria-label="Full screen"><Maximize /></IconButton>
            <IconButton aria-label="Minimise"><Minus /></IconButton>
            <IconButton aria-label="Close"><Cross /></IconButton>
          </WindowButtons>
        </CardHead>
        <CardBody $bottom={bottom}>{children}</CardBody>
      </Card>
      <Port $end><PortNumber $end>1</PortNumber><PortRows>{output}</PortRows></Port>
    </NodeFrame>
  );
}

export default function App() {
  return (
    <Shell>
      <GlobalStyle />
      <Sidebar>
        <LogoLink href="#"><Logo /></LogoLink>
        <NavButton aria-label="Filters"><Funnel /></NavButton>
        <NavButton aria-label="Dashboard"><Gauge /></NavButton>
        <NavButton aria-label="Data"><Database /></NavButton>
        <NavButton aria-label="Workflows"><ActiveDisc><Tree w={26} /></ActiveDisc></NavButton>
        <NavButton aria-label="Help"><HelpChat /></NavButton>
        <NavRule />
        <NavButton $muted aria-label="Projects"><Folder size={32} /></NavButton>
      </Sidebar>
      <TopBar>
        <Crumb href="#"><Folder />Marketing - Campaign Manager</Crumb>
        <ArrowRight />
        <Crumb href="#" $current><Tree />Email Generation</Crumb>
      </TopBar>
      <Canvas>
        <CanvasDrawing>
          <defs>
            <pattern id="dots" x="-13.100" y="-9.200" width="30.920" height="30.920" patternUnits="userSpaceOnUse">
              <circle cx="15.460" cy="15.460" r="1.900" fill="#d3d9e0" />
            </pattern>
          </defs>
          <rect width="100%" height="100%" fill="url(#dots)" />
          <g transform="translate(-68 -72)" fill="none" stroke="#111" strokeWidth="2.500" strokeDasharray="6.500 6">
            <path d="M159 67 160 108" />
            <path d="M160 1613C160 1893 1101 -142 1101 114" />
            <path d="M1101 1855V1960" />
          </g>
          <g transform="translate(-68 -72)" fill="#111">
            <path d="M153 108h14l-7 9z" />
            <path d="M1094 110h14l-7 10z" />
          </g>
        </CanvasDrawing>

        <Window icon={<Clipboard />} title="Agent output" x={62} y={49} w={877} input="20000 rows" output="13010 rows" bottom={34}>
          <FieldLabel htmlFor="columns">COLUMNS</FieldLabel>
          <SelectBox $w="451px">
            <PlainSelect id="columns"><option>3/22 selected: age, luxury level, trip type</option></PlainSelect>
            <ChevronDown />
          </SelectBox>
          <Filters>
            <FiltersTitle>ACTIVE FILTERS</FiltersTitle>
            <Chip>age = [29 - ]<IconButton aria-label="Remove age filter"><Cross size={18} weight={2.2} /></IconButton></Chip>
            <Chip>luxury_level in [comfort, budget, luxury]<IconButton aria-label="Remove luxury filter"><Cross size={18} weight={2.2} /></IconButton></Chip>
          </Filters>
          <TableArea>
            <DataTable>
              <thead>
                <tr>
                  <HeadCell><HeadButton><NumberMark>1<sup>2</sup>3</NumberMark><HeadName>age</HeadName><Sort /></HeadButton></HeadCell>
                  <HeadCell $active><HeadButton><Shapes /><HeadName>luxury level</HeadName><Sort active /></HeadButton></HeadCell>
                  <HeadCell><HeadButton><Shapes /><HeadName>trip type</HeadName><Sort /></HeadButton></HeadCell>
                </tr>
                <tr>
                  <FilterCell $pad="20px 0 0 9px"><AgeFilter /></FilterCell>
                  <FilterCell $pad="30px 10px 0 13px">
                    <ShareChart name="luxury level distribution" color="#004bb0" shares={[{ w: 135, h: 76 }, { w: 54, h: 78 }, { w: 44, h: 68 }]} />
                    <CategoryBox>
                      <Refresh color="#0a41c2" />
                      <PlainSelect aria-label="Luxury level categories"><option>3 categories selected</option></PlainSelect>
                      <ChevronDown />
                    </CategoryBox>
                  </FilterCell>
                  <FilterCell $pad="30px 10px 0 13px">
                    <ShareChart name="trip type distribution" color="#1960be" shares={[{ w: 97, h: 78 }, { w: 60, h: 97 }, { w: 36, h: 36 }, { w: 34, h: 75 }, { w: 6, h: 71 }]} />
                    <CategoryBox>
                      <Refresh color="#444" />
                      <PlainSelect $hint aria-label="Trip type categories"><option>filter categories</option></PlainSelect>
                      <ChevronDown />
                    </CategoryBox>
                  </FilterCell>
                </tr>
              </thead>
              <tbody>
                {rows.map(([age, level, trip], i) => (
                  <tr key={i}>
                    <DataCell>{age}</DataCell>
                    <DataCell><Pill>{level}</Pill></DataCell>
                    <DataCell><Pill>{trip}</Pill></DataCell>
                  </tr>
                ))}
              </tbody>
            </DataTable>
            <ScrollTrack><ScrollThumb /></ScrollTrack>
          </TableArea>
          <SettingsButton><Gear />Settings</SettingsButton>
        </Window>

        <Window icon={<Telescope />} title="Clustering" x={1003} y={51} w={1354} input="13010 rows" output="13010 rows" bottom={60}>
          <FieldLabel htmlFor="inputs">INPUT COLUMNS</FieldLabel>
          <SelectBox>
            <PlainSelect id="inputs"><option>4/21 selected: trip type, luxury level, trip_length_days, age</option></PlainSelect>
            <ChevronDown />
          </SelectBox>
          <LabelsTitle>LABELS</LabelsTitle>
          <LabelList>
            {clusters.map((c) => (
              <LabelItem key={c.name}>
                <IconButton aria-label={`Expand ${c.name}`}><ChevronRight /></IconButton>
                <Dot $color={c.color} />
                <CheckLabel>
                  <Check type="checkbox" defaultChecked />
                  <Count>{c.count}</Count>
                  {c.name}
                </CheckLabel>
              </LabelItem>
            ))}
          </LabelList>
          <Plot>
            <Toolbar>
              <ToolButton aria-label="Zoom to selection"><ZoomSelect /></ToolButton>
              <ToolButton aria-label="Select area"><SelectArea /></ToolButton>
              <ToolButton aria-label="Reset zoom"><ResetZoom /></ToolButton>
              <ToolRule />
              <ToolButton aria-label="Opacity"><Overlap /></ToolButton>
              <ToolButton aria-label="Point size"><PointSize /></ToolButton>
              <ToolButton aria-label="Zoom range"><CodeZoom /></ToolButton>
            </Toolbar>
            <Scatter />
          </Plot>
        </Window>
      </Canvas>
    </Shell>
  );
}
